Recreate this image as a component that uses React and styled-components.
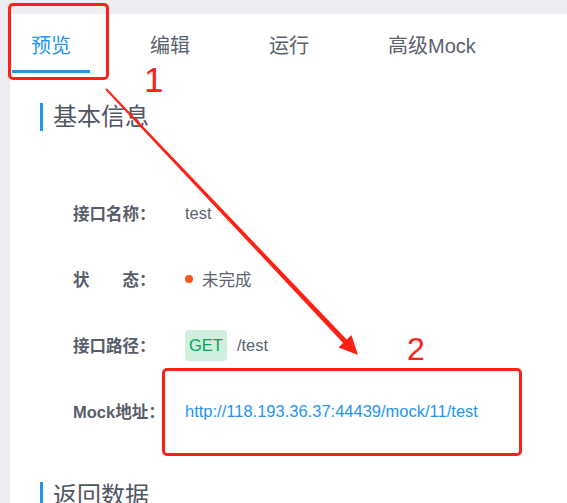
import React from 'react'
import styled, { createGlobalStyle } from 'styled-components'

const BLUE = '#2395f1'
const RED = '#fe2216'
const TEXT = '#575d69'

const Global = createGlobalStyle`
  html, body {
    margin: 0;
    padding: 0;
    overflow: hidden;
    background: #eceef1;
  }
  body {
    font-family: "Liberation Sans", "Noto Sans CJK SC", sans-serif;
    color: ${TEXT};
  }
`

const tabs = ['预览', '编辑', '运行', '高级Mock']

const rows = [
  { label: '接口名称：', kind: 'text', value: 'test' },
  { label: '状\u3000\u3000态：', kind: 'status', value: '未完成' },
  { label: '接口路径：', kind: 'path', value: '/test' },
  { label: 'Mock地址：', kind: 'link', value: 'http://118.193.36.37:44439/mock/11/test' },
]

const App = () => (
  <Page>
    <Global />
    <Card>
      <TabBar>
        {tabs.map((t, i) => (
          <Tab key={t} active={i === 0}>
            {t}
          </Tab>
        ))}
      </TabBar>

      <SectionTitle>基本信息</SectionTitle>
      <InfoList>
        {rows.map(r => (
          <Row key={r.label}>
            <Label>{r.label}</Label>
            {r.kind === 'text' && <Value>{r.value}</Value>}
            {r.kind === 'status' && (
              <Value>
                <Dot />
                {r.value}
              </Value>
            )}
            {r.kind === 'path' && (
              <Value>
                <MethodTag>GET</MethodTag>
                {r.value}
              </Value>
            )}
            {r.kind === 'link' && <Link>{r.value}</Link>}
          </Row>
        ))}
      </InfoList>

      <SectionTitle second>返回数据</SectionTitle>
    </Card>

    <Mark left={8} top={3} width={101} height={77} />
    <Mark left={162} top={368} width={360} height={88} />
    <StepNo left={144} top={62} size={35}>
      1
    </StepNo>
    <StepNo left={407} top={333} size={32}>
      2
    </StepNo>
    <Arrow width="567" height="503" viewBox="0 0 567 503">
      <polygon
        fill={RED}
        points="105.3,89.7 343.1,342.9 338.4,347.4 358,355 351.4,335 346.7,339.5 106.7,88.3"
      />
    </Arrow>
  </Page>
)

export default App

const Page = styled.div`
  position: relative;
  width: 567px;
  height: 503px;
  padding: 14px 0 0 10px;
  box-sizing: border-box;
`

const Card = styled.div`
  background: #fff;
  height: 100%;
  display: flex;
  flex-direction: column;
`

const TabBar = styled.div`
  display: flex;
  padding-left: 2px;
  gap: 41px;
`

const Tab = styled.div`
  font-size: 20px;
  line-height: 28px;
  padding: 18px 19px 10px;
  color: ${p => (p.active ? BLUE : '#5b616d')};
  border-bottom: 3px solid ${p => (p.active ? BLUE : 'transparent')};
`

const SectionTitle = styled.h2`
  margin: ${p => (p.second ? '38px' : '30px')} 0 0 30px;
  padding-left: 10px;
  border-left: 3px solid ${BLUE};
  font-size: 24px;
  line-height: 28px;
  font-weight: 400;
  color: #4f5562;
`

const InfoList = styled.div`
  display: flex;
  flex-direction: column;
  margin-top: 49px;
  padding-left: 63px;
`

const Row = styled.div`
  display: flex;
  align-items: center;
  height: 66px;
  font-size: 16px;
`

const Label = styled.div`
  width: 112px;
  flex-shrink: 0;
  font-weight: 700;
  font-size: 16.5px;
  color: #575d69;
  white-space: pre;
`

const Value = styled.div`
  display: flex;
  align-items: center;
  font-size: 16.5px;
  color: #5d6370;
`

const Dot = styled.span`
  width: 8px;
  height: 8px;
  border-radius: 50%;
  background: #fa541c;
  margin-right: 9px;
`

const MethodTag = styled.span`
  height: 31px;
  line-height: 31px;
  padding: 0 4px;
  border-radius: 4px;
  background: #cfefdf;
  color: #00a854;
  margin-right: 10px;
`

const Link = styled.a`
  font-size: 16.5px;
  color: ${BLUE};
  text-decoration: none;
`

const Mark = styled.div`
  position: absolute;
  left: ${p => p.left}px;
  top: ${p => p.top}px;
  width: ${p => p.width}px;
  height: ${p => p.height}px;
  box-sizing: border-box;
  border: 3px solid ${RED};
  border-radius: 5px;
  pointer-events: none;
`

const StepNo = styled.div`
  position: absolute;
  left: ${p => p.left}px;
  top: ${p => p.top}px;
  font-family: "Liberation Sans", sans-serif;
  font-size: ${p => p.size}px;
  line-height: 1;
  color: ${RED};
`

const Arrow = styled.svg`
  position: absolute;
  left: 0;
  top: 0;
  pointer-events: none;
`
